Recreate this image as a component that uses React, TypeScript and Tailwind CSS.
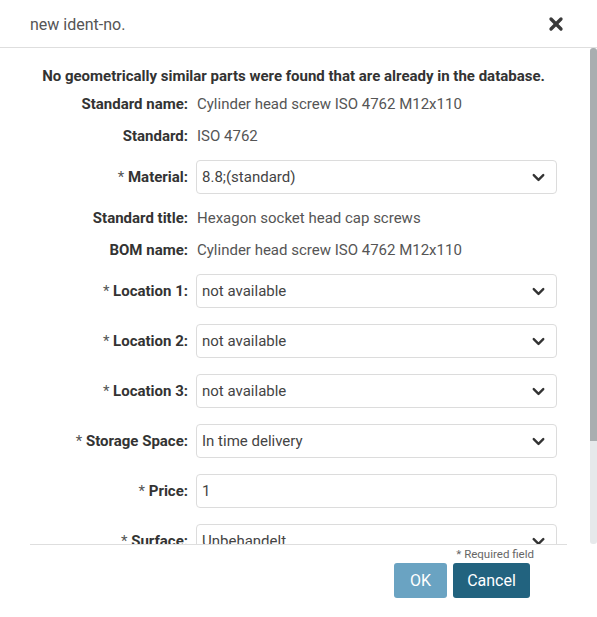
import { ChevronDown, X } from 'lucide-react'

const FONT = "font-['Roboto','Liberation_Sans',sans-serif]"

type Row =
  | { kind: 'text'; label: string; value: string; required?: boolean }
  | { kind: 'select'; label: string; value: string; required?: boolean }
  | { kind: 'input'; label: string; value: string; required?: boolean }

const ROWS: Row[] = [
  { kind: 'text', label: 'Standard name', value: 'Cylinder head screw ISO 4762 M12x110' },
  { kind: 'text', label: 'Standard', value: 'ISO 4762' },
  { kind: 'select', label: 'Material', value: '8.8;(standard)', required: true },
  { kind: 'text', label: 'Standard title', value: 'Hexagon socket head cap screws' },
  { kind: 'text', label: 'BOM name', value: 'Cylinder head screw ISO 4762 M12x110' },
  { kind: 'select', label: 'Location 1', value: 'not available', required: true },
  { kind: 'select', label: 'Location 2', value: 'not available', required: true },
  { kind: 'select', label: 'Location 3', value: 'not available', required: true },
  { kind: 'select', label: 'Storage Space', value: 'In time delivery', required: true },
  { kind: 'input', label: 'Price', value: '1', required: true },
  { kind: 'select', label: 'Surface', value: 'Unbehandelt', required: true },
]

function Label({ row }: { row: Row }) {
  return (
    <div className="w-[158px] shrink-0 text-right text-[15px] text-[#333] whitespace-nowrap">
      {row.required && <span className="font-normal text-[#555]">* </span>}
      <span className="font-bold">{row.label}:</span>
    </div>
  )
}

function FieldRow({ row }: { row: Row }) {
  if (row.kind === 'text') {
    return (
      <div className="flex items-center gap-2 h-8">
        <Label row={row} />
        <span className="pl-px text-[15px] text-[#555]">{row.value}</span>
      </div>
    )
  }
  return (
    <div className="flex items-center gap-2 h-[50px]">
      <Label row={row} />
      <div className="flex-1 h-[34px] flex items-center justify-between border border-[#dcdcdc] rounded bg-white pl-[5px] pr-[8px]">
        <span className="text-[15px] text-[#444]">{row.value}</span>
        {row.kind === 'select' && <ChevronDown className="w-[19px] h-[19px] text-[#333]" strokeWidth={3} />}
      </div>
    </div>
  )
}

export default function App() {
  return (
    <div className={`${FONT} w-[597px] h-[617px] bg-white flex flex-col overflow-hidden`}>
      {/* header */}
      <div className="h-12 shrink-0 flex items-center justify-between pl-[30px] pr-[31px] border-b border-[#dedede]">
        <span className="text-[16px] text-[#555] pt-[2px]">new ident-no.</span>
        <X className="w-[20px] h-[20px] text-[#3a3a3a]" strokeWidth={4} />
      </div>

      {/* body */}
      <div className="relative h-[496px] shrink-0 overflow-hidden">
        <div className="pl-[30px] pr-10 pt-4">
          <p className="h-6 flex items-center justify-center text-[15px] font-bold text-[#333] whitespace-nowrap">
            No geometrically similar parts were found that are already in the database.
          </p>
          {ROWS.map(r => (
            <FieldRow key={r.label} row={r} />
          ))}
        </div>

        {/* scrollbar */}
        <div className="absolute right-0 top-0 bottom-0 w-[7px] flex flex-col">
          <div className="h-[393px] bg-[#a9aeb0] rounded-t-[3px]" />
          <div className="flex-1 bg-[#e6e9eb] rounded-b-[3px]" />
        </div>
      </div>

      {/* footer */}
      <div className="mx-[30px] border-t border-[#dedede] flex flex-col items-end pr-[33px]">
        <span className="mt-[1px] text-[11.5px] text-[#666] leading-4">* Required field</span>
        <div className="flex gap-[6px] mt-[1px] mr-[4px]">
          <button className="w-[53px] h-[35px] rounded-[3px] bg-[#6aa3c2] text-white text-[16px]">OK</button>
          <button className="w-[77px] h-[35px] rounded-[3px] bg-[#22637f] text-white text-[16px]">Cancel</button>
        </div>
      </div>
    </div>
  )
}
